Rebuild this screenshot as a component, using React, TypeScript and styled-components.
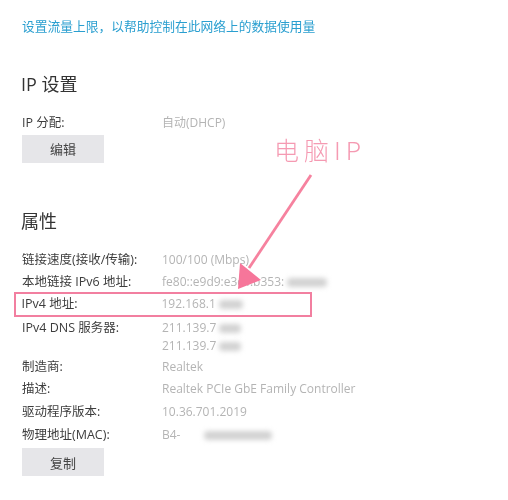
import styled, { createGlobalStyle } from "styled-components";

const GlobalStyle = createGlobalStyle`
  html, body {
    margin: 0;
    background: #fff;
  }
`;

const Page = styled.div`
  position: relative;
  width: 508px;
  height: 500px;
  overflow: hidden;
  box-sizing: border-box;
  padding: 17px 0 0 22px;
  background: #fff;
  color: #3a3a3a;
  font-family: "Open Sans", "Noto Sans CJK SC", sans-serif;
  font-size: 12.5px;
  filter: blur(0.45px);
`;

const LimitLink = styled.div`
  color: #2a9fd0;
  font-size: 12.75px;
  line-height: 18px;
`;

const SectionTitle = styled.h2<{ $top: number }>`
  margin: ${(p) => p.$top}px 0 0 -1px;
  font-size: 18px;
  font-weight: 400;
  line-height: 26px;
  color: #333;
`;

const List = styled.div<{ $top: number }>`
  margin-top: ${(p) => p.$top}px;
  display: flex;
  flex-direction: column;
`;

const Row = styled.div<{ $marked?: boolean }>`
  display: flex;
  align-items: flex-start;
  width: 298px;
  box-sizing: border-box;
  margin: ${(p) => (p.$marked ? "-1px 0 -1px -8px" : "0 0 0 -8px")};
  padding: ${(p) => (p.$marked ? "1.5px 0 0 5.5px" : "3px 0 0 8px")};
  min-height: ${(p) => (p.$marked ? "25px" : "22.6px")};
  line-height: 17px;
  border: ${(p) => (p.$marked ? "2.5px solid #f27fa0" : "0")};
`;

const Label = styled.div`
  width: 140px;
  flex: none;
  color: #3d3d3d;
  white-space: nowrap;
`;

const Value = styled.div`
  color: #b4b4b4;
  font-size: 12px;
  white-space: nowrap;
  line-height: 18px;
`;

const Smudge = styled.span<{ $width: number; $gap?: number }>`
  display: inline-block;
  width: ${(p) => p.$width}px;
  height: 9px;
  margin-left: ${(p) => p.$gap ?? 3}px;
  vertical-align: -1px;
  border-radius: 4px;
  background: #d2d2d2;
  filter: blur(2.5px);
`;

const ActionButton = styled.button<{ $top: number }>`
  display: block;
  width: 82px;
  height: 28px;
  margin-top: ${(p) => p.$top}px;
  border: 0;
  padding: 0;
  background: #e6e6e9;
  color: #444;
  font: inherit;
  font-size: 13px;
`;

const Annotation = styled.div`
  position: absolute;
  left: 274px;
  top: 132px;
  color: #f59ab2;
  font-family: "Noto Sans CJK SC", sans-serif;
  font-size: 25px;
  font-weight: 300;
  line-height: 34px;
  letter-spacing: 5px;
`;

const Arrow = styled.svg`
  position: absolute;
  left: 230px;
  top: 170px;
`;

export default function App() {
  return (
    <Page>
      <GlobalStyle />
      <LimitLink>设置流量上限，以帮助控制在此网络上的数据使用量</LimitLink>

      <SectionTitle $top={36}>IP 设置</SectionTitle>
      <List $top={14}>
        <Row>
          <Label>IP 分配:</Label>
          <Value>自动(DHCP)</Value>
        </Row>
      </List>
      <ActionButton $top={1}>编辑</ActionButton>

      <SectionTitle $top={45}>属性</SectionTitle>
      <List $top={14}>
        <Row>
          <Label>链接速度(接收/传输):</Label>
          <Value>100/100 (Mbps)</Value>
        </Row>
        <Row>
          <Label>本地链接 IPv6 地址:</Label>
          <Value>
            fe80::e9d9:e3c4:b353:
            <Smudge $width={40} />
          </Value>
        </Row>
        <Row $marked>
          <Label>IPv4 地址:</Label>
          <Value>
            192.168.1
            <Smudge $width={24} />
          </Value>
        </Row>
        <Row>
          <Label>IPv4 DNS 服务器:</Label>
          <Value>
            211.139.7
            <Smudge $width={22} />
            <br />
            211.139.7
            <Smudge $width={22} />
          </Value>
        </Row>
        <Row>
          <Label>制造商:</Label>
          <Value>Realtek</Value>
        </Row>
        <Row>
          <Label>描述:</Label>
          <Value>Realtek PCIe GbE Family Controller</Value>
        </Row>
        <Row>
          <Label>驱动程序版本:</Label>
          <Value>10.36.701.2019</Value>
        </Row>
        <Row>
          <Label>物理地址(MAC):</Label>
          <Value>
            B4-
            <Smudge $width={68} $gap={24} />
          </Value>
        </Row>
      </List>
      <ActionButton $top={3}>复制</ActionButton>

      <Annotation>电脑IP</Annotation>
      <Arrow width="90" height="125" viewBox="0 0 90 125">
        <line x1="81" y1="5" x2="19" y2="98" stroke="#f6829f" strokeWidth="2.8" />
        <polygon points="8,119 10,93 31,110" fill="#f6769a" />
      </Arrow>
    </Page>
  );
}
